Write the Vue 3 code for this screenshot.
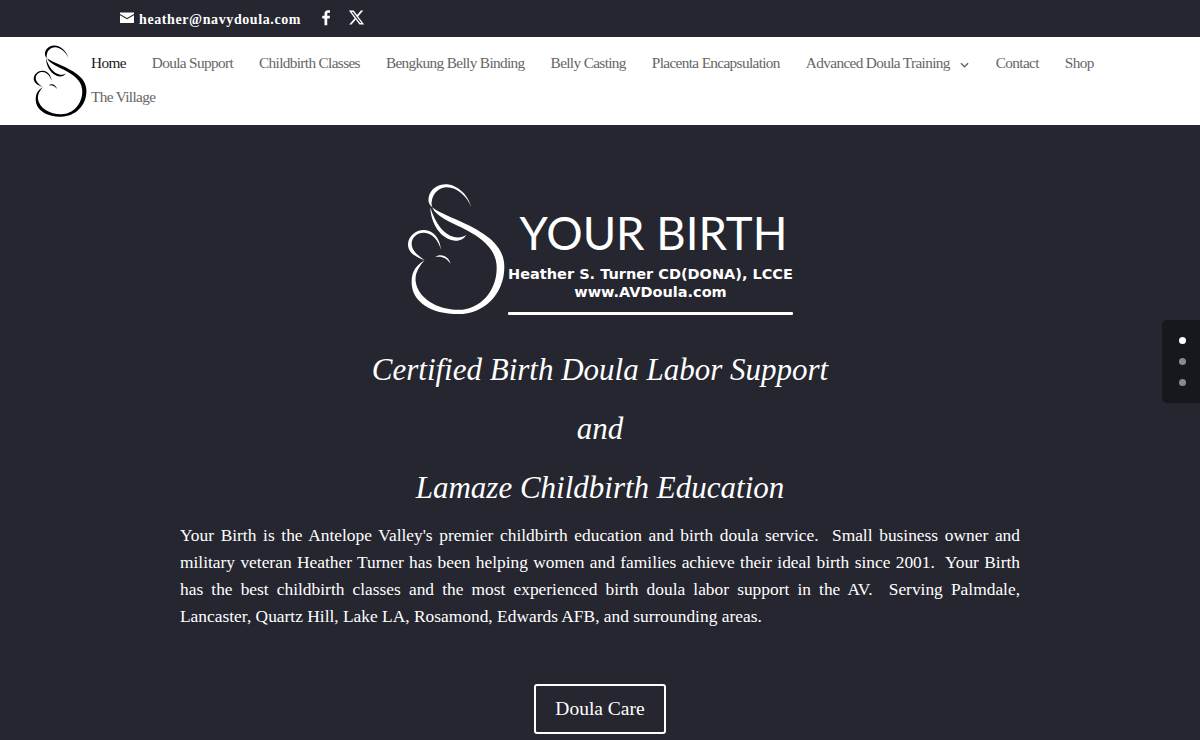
<script setup>
const navItems = [
  { label: 'Home', active: true },
  { label: 'Doula Support' },
  { label: 'Childbirth Classes' },
  { label: 'Bengkung Belly Binding' },
  { label: 'Belly Casting' },
  { label: 'Placenta Encapsulation' },
  { label: 'Advanced Doula Training', caret: true },
  { label: 'Contact' },
  { label: 'Shop' },
  { label: 'The Village' }
]

/* logo mark, same paths for the small and the big one */
const markPaths = [
  'M243 112 C235 75 200 42 165 43 C130 45 112 70 115 95 C118 115 150 128 200 150 C285 188 343 225 343 292 C343 375 280 434 205 434 C120 434 62 395 64 335 C64 305 80 285 103 272 C85 292 74 312 76 335 C82 385 140 421 205 421 C270 421 320 365 320 295 C320 230 262 195 190 162 C145 140 122 122 124 98 C127 68 148 52 170 52 C200 52 232 80 243 112 Z',
  'M120 112 C122 160 150 208 195 213 C210 214 222 207 229 195 C218 203 205 205 192 202 C160 194 135 160 120 112 Z',
  'M103 272 C75 262 52 248 53 222 C55 198 78 180 102 181 C128 182 150 205 152 240 C145 212 125 190 102 189 C82 188 64 203 64 222 C64 244 85 258 103 272 Z',
  'M135 262 C150 250 175 258 181 282 C170 266 155 258 135 262 Z'
]
</script>

<template>
  <div class="page">
    <div class="top-bar">
      <span class="mail-link">
        <svg class="mail-icon" viewBox="0 0 14 11">
          <path d="M0 0.5 H14 V2 L7 6 L0 2 Z" fill="#fff" />
          <path d="M0 3.2 L7 7.2 L14 3.2 V11 H0 Z" fill="#fff" />
        </svg>
        heather@navydoula.com
      </span>
      <svg class="social-fb" viewBox="0 0 24 24">
        <path fill="#fff" d="M13.5 22v-8.2h2.8l.4-3.2h-3.2V8.5c0-.9.3-1.6 1.6-1.6h1.7V4.1c-.3 0-1.3-.1-2.5-.1-2.4 0-4.1 1.5-4.1 4.2v2.4H7.5v3.2h2.7V22z" />
      </svg>
      <svg class="social-x" viewBox="0 0 24 24">
        <path fill="#fff" d="M18.244 2.25h3.308l-7.227 8.26 8.502 11.24H16.17l-5.214-6.817L4.99 21.75H1.68l7.73-8.835L1.254 2.25H8.08l4.713 6.231zm-1.161 17.52h1.833L7.084 4.126H5.117z" />
      </svg>
    </div>

    <header class="main-header">
      <svg class="small-mark" viewBox="50 40 295 396">
        <path v-for="d in markPaths" :key="d" :d="d" fill="#000" />
      </svg>
      <nav class="main-nav">
        <a v-for="item in navItems" :key="item.label" class="nav-link" :class="{ active: item.active }">
          {{ item.label }}
          <svg v-if="item.caret" class="caret" viewBox="0 0 10 6">
            <path d="M1 1 L5 5 L9 1" fill="none" stroke="#666" stroke-width="1.6" />
          </svg>
        </a>
      </nav>
    </header>

    <section class="hero">
      <div class="brand">
        <svg class="big-mark" viewBox="50 40 295 396">
          <path v-for="d in markPaths" :key="d" :d="d" fill="#fff" />
        </svg>
        <div class="brand-text">
          <div class="brand-name">YOUR BIRTH</div>
          <div class="brand-person">Heather S. Turner CD(DONA), LCCE</div>
          <div class="brand-site">www.AVDoula.com</div>
          <div class="brand-rule"></div>
        </div>
      </div>

      <h1 class="headline">
        Certified Birth Doula Labor Support<br />
        and<br />
        Lamaze Childbirth Education
      </h1>

      <p class="intro">
        Your Birth is the Antelope Valley's premier childbirth education and birth doula service.&nbsp; Small business owner and military veteran Heather Turner has been helping women and families achieve their ideal birth since 2001.&nbsp; Your Birth has the best childbirth classes and the most experienced birth doula labor support in the AV.&nbsp; Serving Palmdale, Lancaster, Quartz Hill, Lake LA, Rosamond, Edwards AFB, and surrounding areas.
      </p>

      <a class="care-btn">Doula Care</a>
    </section>

    <div class="side-dots">
      <span class="dot on"></span>
      <span class="dot"></span>
      <span class="dot"></span>
    </div>
  </div>
</template>

<style>
html,
body {
  margin: 0;
  overflow: hidden;
}
</style>

<style scoped>
.page {
  position: relative;
  height: 740px;
  overflow: hidden;
  background: #25262f;
  font-family: "Liberation Serif", serif;
  color: #fff;
}

.top-bar {
  height: 37px;
  padding-left: 120px;
  display: flex;
  align-items: center;
  background: #25262f;
}

.mail-link {
  display: flex;
  align-items: center;
  gap: 5px;
  margin-top: 2px;
  margin-right: 15px;
  font-size: 14px;
  font-weight: 700;
  letter-spacing: 0.6px;
}

.mail-icon {
  width: 14px;
  height: 11px;
  margin-top: -4px;
}

.social-fb {
  width: 20px;
  height: 20px;
  margin-top: -3px;
  margin-right: 12px;
}

.social-x {
  width: 17px;
  height: 17px;
  margin-top: -3px;
}

.main-header {
  height: 88px;
  padding-left: 33px;
  display: flex;
  align-items: center;
  gap: 4px;
  background: #fff;
}

.small-mark {
  width: 54px;
  height: 72px;
  flex-shrink: 0;
}

.main-nav {
  display: flex;
  flex-wrap: wrap;
  align-items: center;
  column-gap: 26px;
  width: 1040px;
  align-self: flex-start;
  padding-top: 9px;
}

.nav-link {
  display: flex;
  align-items: center;
  height: 34px;
  font-size: 15.3px;
  letter-spacing: -0.65px;
  color: #666;
  white-space: nowrap;
}

.nav-link.active {
  color: #1a1a1a;
}

.caret {
  width: 9px;
  height: 6px;
  margin-left: 10px;
  margin-right: 1px;
  margin-top: 3px;
}

.hero {
  display: flex;
  flex-direction: column;
  align-items: center;
  padding-top: 58px;
}

.brand {
  display: flex;
  align-items: flex-start;
  gap: 3px;
  height: 157px;
}

.big-mark {
  width: 98px;
  height: 132px;
  flex-shrink: 0;
}

.brand-text {
  width: 285px;
  display: flex;
  flex-direction: column;
  align-items: center;
  padding-top: 23px;
}

.brand-name {
  font-family: "Lato", sans-serif;
  font-size: 45.5px;
  line-height: 54px;
  margin-left: 6px;
  white-space: nowrap;
}

.brand-person {
  font-family: "DejaVu Sans", sans-serif;
  font-size: 14.5px;
  font-weight: 700;
  line-height: 17px;
  margin-top: 6px;
  white-space: nowrap;
}

.brand-site {
  font-family: "DejaVu Sans", sans-serif;
  font-size: 14.5px;
  font-weight: 700;
  line-height: 19px;
}

.brand-rule {
  width: 100%;
  height: 3px;
  margin-top: 10px;
  background: #fff;
  border-radius: 1px;
}

.headline {
  margin: 0;
  font-size: 31px;
  font-style: italic;
  font-weight: 400;
  line-height: 59px;
  text-align: center;
}

.intro {
  width: 840px;
  margin: 5px 0 0;
  font-size: 17.4px;
  line-height: 27px;
  text-align: justify;
}

.care-btn {
  margin-top: 54px;
  width: 132px;
  height: 50px;
  box-sizing: border-box;
  display: flex;
  align-items: center;
  justify-content: center;
  border: 2px solid #fff;
  border-radius: 3px;
  font-size: 19.5px;
}

.side-dots {
  position: absolute;
  top: 320px;
  right: 0;
  width: 38px;
  height: 83px;
  box-sizing: border-box;
  padding: 17px 0 0 17px;
  display: flex;
  flex-direction: column;
  gap: 14px;
  background: #17181e;
  border-radius: 5px 0 0 5px;
}

.dot {
  width: 7px;
  height: 7px;
  border-radius: 50%;
  background: #8a8a8d;
}

.dot.on {
  background: #fff;
}
</style>
